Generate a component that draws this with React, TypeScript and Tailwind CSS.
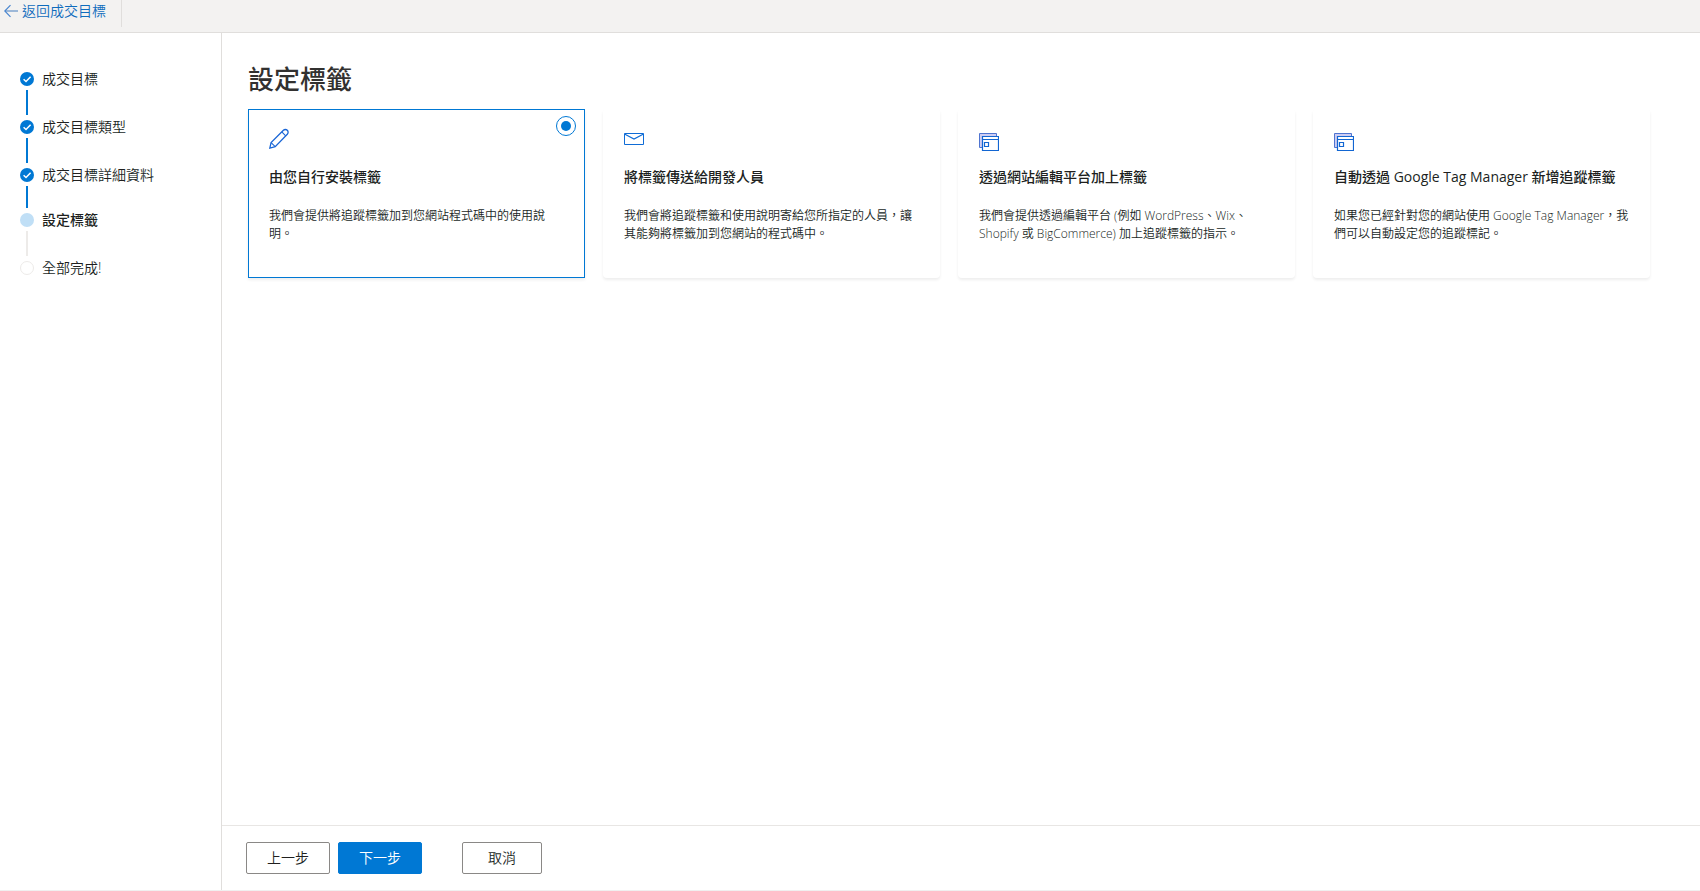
import React, { useState } from "react";

type StepState = "done" | "current" | "pending";

const steps: { label: string; state: StepState }[] = [
  { label: "成交目標", state: "done" },
  { label: "成交目標類型", state: "done" },
  { label: "成交目標詳細資料", state: "done" },
  { label: "設定標籤", state: "current" },
  { label: "全部完成!", state: "pending" },
];

const PencilIcon = () => (
  <svg width="20" height="24" viewBox="0 0 20 24" fill="none" stroke="#1a66d6" strokeWidth="1.3">
    <path d="M.8 21.2 2.1 15.6 14.4 3.3a2.75 2.75 0 0 1 3.9 0 2.75 2.75 0 0 1 0 3.9L6.2 19.7Z" />
    <path d="M12.8 4.9l3.9 3.9M2.1 15.6 6.2 19.7" strokeWidth="1.1" />
  </svg>
);

const MailIcon = () => (
  <svg width="20" height="24" viewBox="0 0 20 24" fill="none" stroke="#0f6cd6" strokeWidth="1">
    <path d="M.5 6.5h19v11H.5Z" />
    <path d="M.5 7 10 12 19.5 7" strokeWidth="1.2" />
  </svg>
);

const WebsiteIcon = () => (
  <svg width="20" height="24" viewBox="0 0 20 24" fill="none" stroke="#1266d2" strokeWidth="1">
    <path d="M.5 6.5h17v3h-14v11h-3Z" fill="#cfcdf2" stroke="none" />
    <path d="M3 20.5H.5v-14h17V9" stroke="#4f74d0" />
    <path d="M3.5 9.5h16v14h-16ZM3.5 12.5h16M5.5 15.5h4v4h-4Z" strokeWidth="1.2" />
  </svg>
);

const options = [
  {
    id: "self",
    icon: <PencilIcon />,
    title: "由您自行安裝標籤",
    text: "我們會提供將追蹤標籤加到您網站程式碼中的使用說明。",
  },
  {
    id: "developer",
    icon: <MailIcon />,
    title: "將標籤傳送給開發人員",
    text: "我們會將追蹤標籤和使用說明寄給您所指定的人員，讓其能夠將標籤加到您網站的程式碼中。",
  },
  {
    id: "platform",
    icon: <WebsiteIcon />,
    title: "透過網站編輯平台加上標籤",
    text: "我們會提供透過編輯平台 (例如 WordPress、Wix、Shopify 或 BigCommerce) 加上追蹤標籤的指示。",
  },
  {
    id: "gtm",
    icon: <WebsiteIcon />,
    title: "自動透過 Google Tag Manager 新增追蹤標籤",
    text: "如果您已經針對您的網站使用 Google Tag Manager，我們可以自動設定您的追蹤標記。",
  },
];

const StepDot: React.FC<{ state: StepState }> = ({ state }) => {
  if (state === "done") {
    return (
      <svg width="14" height="14" viewBox="0 0 14 14" fill="none">
        <circle cx="7" cy="7" r="7" fill="#0078d4" />
        <path d="M3.6 7.3 6 9.5l4.6-4.7" stroke="#fff" strokeWidth="1.5" />
      </svg>
    );
  }
  return (
    <span
      className={
        state === "current"
          ? "size-[14px] rounded-full bg-[#c0dff6]"
          : "size-[14px] rounded-full border border-[#edebe9]"
      }
    />
  );
};

const Stepper = () => (
  <ol className="w-[222px] shrink-0 border-r border-[#e0dedc] pl-5 pt-[39px] text-sm leading-[14px]">
    {steps.map((step, i) => (
      <li key={step.label} aria-current={step.state === "current" ? "step" : undefined}>
        <div className="flex h-[14px] items-center gap-2">
          <StepDot state={step.state} />
          <span className={step.state === "current" ? "font-medium" : ""}>{step.label}</span>
        </div>
        {i < steps.length - 1 && (
          <div
            className={`mb-[5px] ml-[6px] mt-1 w-[2px] ${
              steps[i + 1].state === "current" ? "h-[22px]" : "h-[25px]"
            } ${step.state === "done" ? "bg-[#0078d4]" : "bg-[#edebe9]"}`}
          />
        )}
      </li>
    ))}
  </ol>
);

const App: React.FC = () => {
  const [selected, setSelected] = useState("self");

  return (
    <div className="flex min-h-screen flex-col border-b border-[#f0f0f0] bg-white font-['Open_Sans','Noto_Sans_CJK_TC',sans-serif] font-[350] text-[#201f1e]">
      <header className="flex h-[33px] items-start border-b border-[#e0dedc] bg-[#f3f2f1]">
        <a
          href="#"
          className="flex h-[27px] items-start gap-1 border-r border-[#e0dedc] pl-1 pr-[15px] text-sm leading-[22px] text-[#0f6cbd]"
        >
          <svg width="14" height="22" viewBox="0 0 14 22" fill="none" strokeWidth="1.2">
            <path d="M1 11h13" stroke="#9db8d8" strokeWidth="2" />
            <path d="M6.5 5.2.8 11l5.7 5.8" stroke="#4a86cf" />
          </svg>
          返回成交目標
        </a>
      </header>

      <div className="flex flex-1">
        <Stepper />
        <div className="flex min-w-0 flex-1 flex-col">
          <main className="flex-1 pl-[26px] pr-[50px] pt-8">
            <h1 className="mb-4 text-[26px] font-medium leading-7 text-[#323130]">設定標籤</h1>
            <div className="grid grid-cols-4 gap-[18px]">
              {options.map((option) => (
                <label
                  key={option.id}
                  className={`relative cursor-pointer border pb-[34px] pl-5 pr-4 pt-[17px] shadow-[0_2px_3px_rgba(0,0,0,0.07)] ${
                    selected === option.id ? "border-[#0078d4]" : "rounded-sm border-transparent"
                  }`}
                >
                  <input
                    type="radio"
                    name="setup"
                    value={option.id}
                    aria-label={option.title}
                    checked={selected === option.id}
                    onChange={() => setSelected(option.id)}
                    className="absolute right-2 top-[6px] size-5 appearance-none rounded-full border border-transparent bg-clip-content p-1 checked:border-[#0078d4] checked:bg-[#0078d4]"
                  />
                  {option.icon}
                  <div className="mt-4 text-sm font-medium leading-5">{option.title}</div>
                  <p className="mt-5 text-xs leading-[18px]">{option.text}</p>
                </label>
              ))}
            </div>
          </main>

          <footer className="flex items-center gap-2 border-t border-[#e8e6e4] px-6 py-4 text-sm">
            <button type="button" className="h-8 rounded-[2px] border border-[#8a8886] px-5">
              上一步
            </button>
            <button type="button" className="h-8 rounded-[2px] border border-[#0078d4] bg-[#0078d4] px-5 text-white">
              下一步
            </button>
            <button type="button" className="ml-8 h-8 min-w-20 rounded-[2px] border border-[#8a8886] px-4">
              取消
            </button>
          </footer>
        </div>
      </div>
    </div>
  );
};

export default App;
